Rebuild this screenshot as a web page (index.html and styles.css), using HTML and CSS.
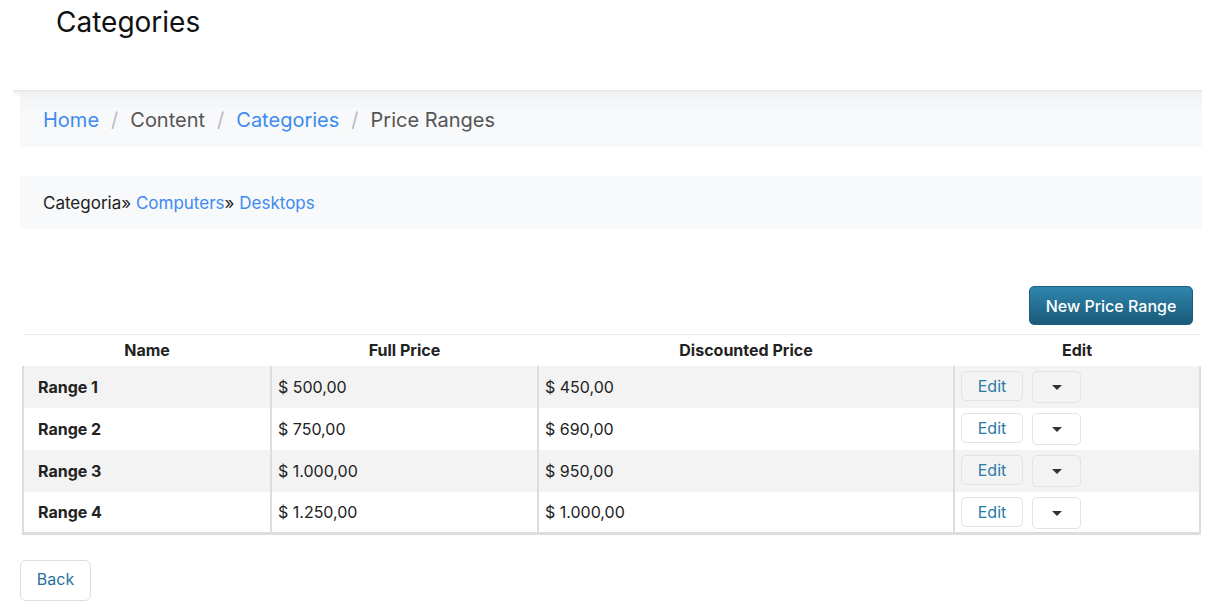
FILE: index.html
```html
<!DOCTYPE html>
<html>
<head>
<meta charset="utf-8">
<link rel="stylesheet" href="styles.css">
</head>
<body>
<header class="page-head">
  <h1 class="title">Categories</h1>
</header>
<div class="bar">
  <nav class="crumbs">
    <a class="link">Home</a><span class="sep">/</span><span class="cur">Content</span><span class="sep">/</span><a class="link">Categories</a><span class="sep">/</span><span class="cur">Price Ranges</span>
  </nav>
</div>
<div class="catpath">Categoria» <a class="link">Computers</a>» <a class="link">Desktops</a></div>
<div class="actions"><button class="btn-primary">New Price Range</button></div>
<table class="grid">
  <thead>
    <tr><th class="c1">Name</th><th class="c2">Full Price</th><th class="c3">Discounted Price</th><th class="c4">Edit</th></tr>
  </thead>
  <tbody>
    <tr><td class="name">Range 1</td><td>$ 500,00</td><td>$ 450,00</td><td class="ops"><button class="btn-edit">Edit</button><button class="btn-drop"><span class="caret"></span></button></td></tr>
    <tr><td class="name">Range 2</td><td>$ 750,00</td><td>$ 690,00</td><td class="ops"><button class="btn-edit">Edit</button><button class="btn-drop"><span class="caret"></span></button></td></tr>
    <tr><td class="name">Range 3</td><td>$ 1.000,00</td><td>$ 950,00</td><td class="ops"><button class="btn-edit">Edit</button><button class="btn-drop"><span class="caret"></span></button></td></tr>
    <tr><td class="name">Range 4</td><td>$ 1.250,00</td><td>$ 1.000,00</td><td class="ops"><button class="btn-edit">Edit</button><button class="btn-drop"><span class="caret"></span></button></td></tr>
  </tbody>
</table>
<div class="foot"><button class="btn-back">Back</button></div>
</body>
</html>
```
FILE: styles.css
```css
* { box-sizing: border-box; }
body {
  margin: 0;
  font-family: "Inter", "Noto Sans", sans-serif;
  color: #222;
  background: #fff;
}
.page-head { height: 90px; padding: 3px 0 0 56px; }
.title {
  margin: 0;
  font-weight: 400;
  font-size: 28px;
  line-height: 38px;
  color: #111;
}
.bar {
  margin: 0 10px 0 13px;
  border-top: 1px solid #e6e6e8;
  background: linear-gradient(#ececee, #fff 6px);
  padding: 2px 0 0 7px;
}
.crumbs {
  background: linear-gradient(#f1f2f4, #f8f9fb 20px);
  height: 54px;
  padding: 0 0 0 23px;
  display: flex;
  align-items: center;
  font-size: 20px;
}
.link { color: #3d8bf0; text-decoration: none; }
.cur { color: #555; }
.sep { color: #bbb; margin: 0 12px; }
.catpath {
  margin: 29px 10px 0 20px;
  height: 53px;
  background: #f8f9fa;
  padding: 0 0 0 23px;
  display: flex;
  align-items: center;
  font-size: 17px;
  color: #222;
  white-space: pre;
}
.actions {
  display: flex;
  justify-content: flex-end;
  padding: 57px 19px 0 0;
}
.btn-primary {
  width: 164px;
  height: 39px;
  border: 1px solid #1b5e7e;
  border-radius: 5px;
  background: linear-gradient(#2f86ad, #1a5979);
  color: #fff;
  font-family: "Inter", sans-serif;
  font-size: 16px;
  font-weight: 500;
}
.grid {
  margin: 9px 0 0 22px;
  width: 1179px;
  border-collapse: collapse;
  border-top: 1px solid #eee;
  font-size: 16px;
}
.grid th {
  height: 31px;
  font-weight: 700;
  text-align: center;
  padding: 0;
  color: #222;
}
.c1 { width: 248px; }
.c2 { width: 267px; }
.c3 { width: 416px; }
.grid tbody tr { height: 42px; }
.grid tbody tr:nth-child(odd) { background: #f3f3f3; }
.grid td {
  padding: 0 0 0 6px;
  border-left: 2px solid #ddd;
  border-right: 2px solid #ddd;
}
.grid tbody tr:last-child td { border-bottom: 3px solid #ddd; }
.grid td.name { font-weight: 700; padding-left: 14px; }
.btn-edit, .btn-drop {
  background: #fff;
  border: 1px solid #e3e3e3;
  border-radius: 5px;
  vertical-align: middle;
}
tbody tr:nth-child(odd) .btn-edit, tbody tr:nth-child(odd) .btn-drop { background: #f3f3f3; }
.btn-edit {
  width: 62px;
  height: 30px;
  color: #2a7aa6;
  font-family: "Inter", sans-serif;
  font-size: 16px;
  padding: 0;
  line-height: 24px;
  vertical-align: top;
}
.btn-drop {
  width: 49px;
  height: 32px;
  margin-left: 9px;
  padding: 0;
  display: inline-flex;
  align-items: center;
  justify-content: center;
  vertical-align: top;
}
.grid td.ops { padding: 5px 0 0 6px; vertical-align: top; }
.caret {
  width: 0; height: 0;
  border-left: 5px solid transparent;
  border-right: 5px solid transparent;
  border-top: 5px solid #333;
  margin-top: 2px;
}
.foot { padding: 25px 0 0 20px; }
.btn-back {
  width: 71px;
  height: 41px;
  background: #fff;
  border: 1px solid #ddd;
  border-radius: 6px;
  color: #2a6f9a;
  font-family: "Inter", sans-serif;
  font-size: 16px;
  line-height: 20px;
  padding: 0 0 3px;
}
```
